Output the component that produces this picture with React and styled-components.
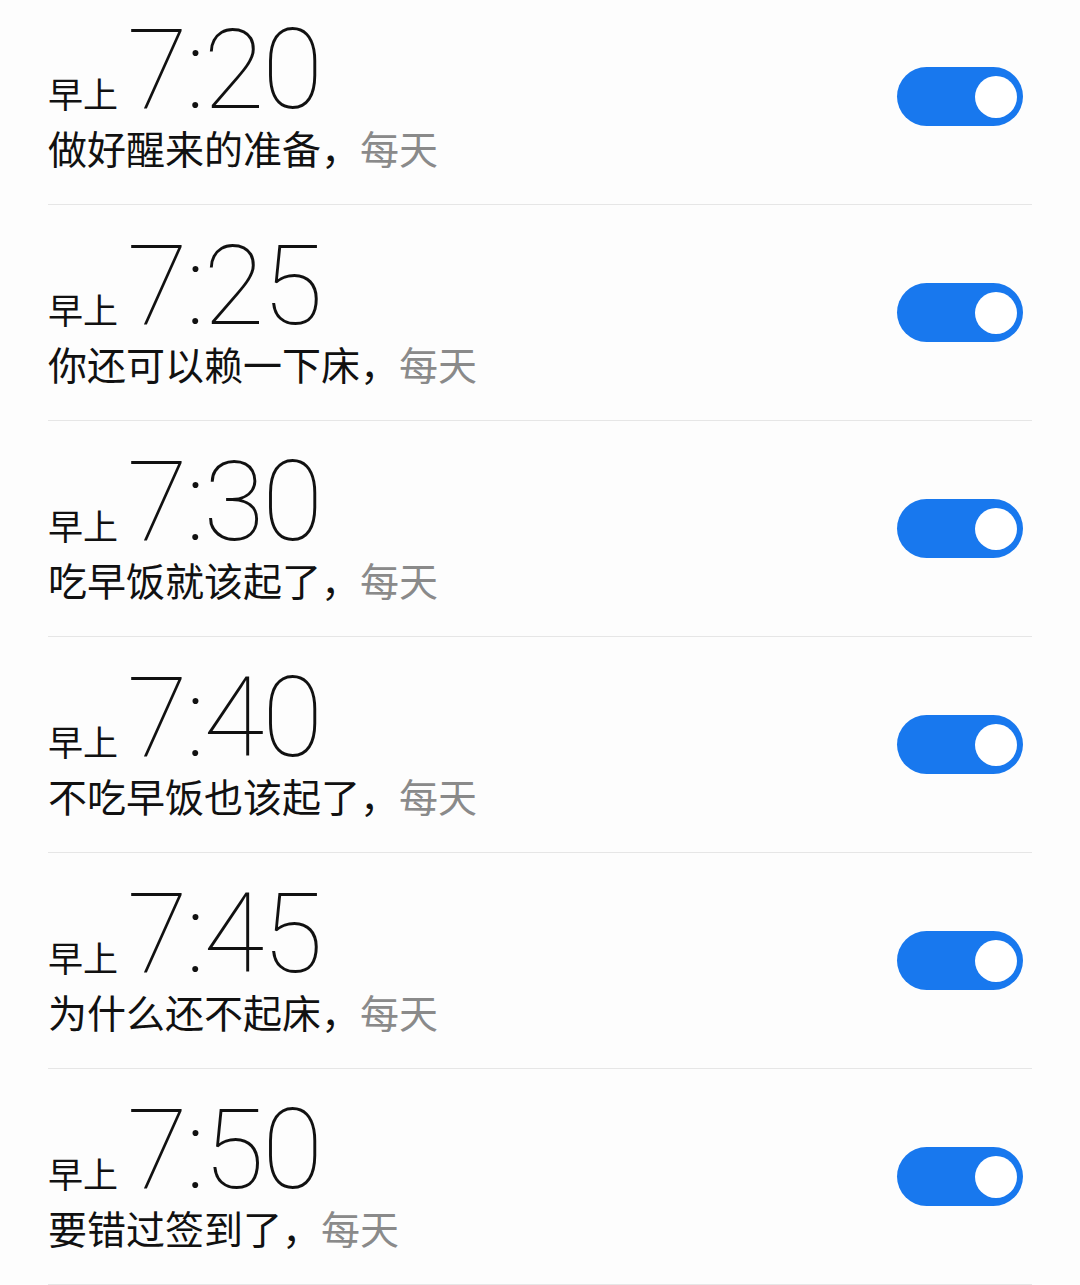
import React from 'react';
import styled, { createGlobalStyle } from 'styled-components';

const alarms = [
  { time: '7:20', note: '做好醒来的准备' },
  { time: '7:25', note: '你还可以赖一下床' },
  { time: '7:30', note: '吃早饭就该起了' },
  { time: '7:40', note: '不吃早饭也该起了' },
  { time: '7:45', note: '为什么还不起床' },
  { time: '7:50', note: '要错过签到了' },
];

const GlobalStyle = createGlobalStyle`
  html, body {
    margin: 0;
    padding: 0;
    background: #fdfdfd;
  }
  body {
    font-family: 'Noto Sans CJK SC', 'Roboto', sans-serif;
    overflow: hidden;
  }
`;

const App = () => (
  <>
    <GlobalStyle />
    <List>
      {alarms.map(a => (
        <Row key={a.time}>
          <Info>
            <TimeLine>
              <Period>早上</Period>
              <Clock>{a.time}</Clock>
            </TimeLine>
            <Note>
              {a.note}，<Repeat>每天</Repeat>
            </Note>
          </Info>
          <Toggle $on>
            <Knob />
          </Toggle>
        </Row>
      ))}
    </List>
  </>
);

export default App;

// the list is scrolled a little, the first row is cut at the top
const List = styled.div`
  display: flex;
  flex-direction: column;
  margin: -11px 48px 0;
`;

const Row = styled.div`
  height: 216px;
  box-sizing: border-box;
  display: flex;
  align-items: center;
  justify-content: space-between;
  border-bottom: 1px solid #e6e6e6;
`;

const Info = styled.div`
  align-self: flex-start;
  padding-top: 26px;
  display: flex;
  flex-direction: column;
`;

const TimeLine = styled.div`
  display: flex;
  align-items: baseline;
  gap: 9px;
`;

const Period = styled.span`
  font-family: 'Noto Sans CJK SC', sans-serif;
  font-size: 35px;
  line-height: 1;
  color: #111;
`;

const Clock = styled.span`
  font-family: 'Roboto', sans-serif;
  font-weight: 100;
  font-size: 111px;
  line-height: 1;
  letter-spacing: -2px;
  color: #111;
`;

const Note = styled.div`
  margin-top: 2px;
  font-family: 'Noto Sans CJK SC', sans-serif;
  font-size: 39px;
  line-height: 1;
  color: #111;
`;

const Repeat = styled.span`
  color: #8a8a8a;
`;

const Toggle = styled.div`
  width: 126px;
  height: 59px;
  margin-right: 9px;
  border-radius: 30px;
  background: ${p => (p.$on ? '#1878ee' : '#d0d0d0')};
  display: flex;
  align-items: center;
  justify-content: ${p => (p.$on ? 'flex-end' : 'flex-start')};
  padding: 0 6px;
  box-sizing: border-box;
`;

const Knob = styled.div`
  width: 42px;
  height: 42px;
  border-radius: 50%;
  background: #fff;
`;
